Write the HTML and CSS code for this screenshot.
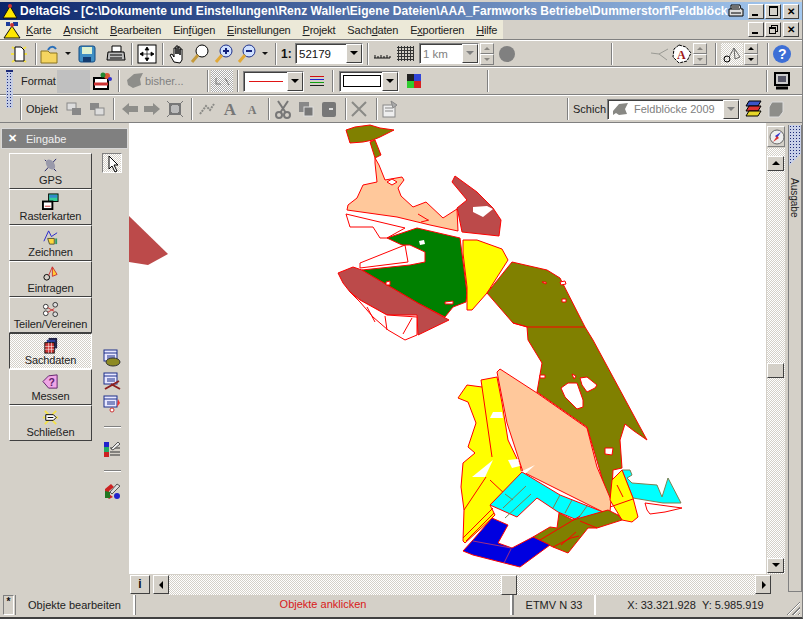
FILE: index.html
```html
<!DOCTYPE html>
<html lang="de">
<head>
  <meta charset="UTF-8" />
  <title>DeltaGIS</title>
  <link rel="stylesheet" href="styles.css">
</head>
<body>

  <!-- Titelleiste -->
  <div class="titlebar">
    <svg class="ico16" viewBox="0 0 16 16"><path d="M8 3L15 15H1z" fill="#ffe800" stroke="#111"/><circle cx="8" cy="3" r="2" fill="#c33"/></svg>
    <div class="title">DeltaGIS - [C:\Dokumente und Einstellungen\Renz Waller\Eigene Dateien\AAA_Farmworks Betriebe\Dummerstorf\Feldblöck</div>
    <div class="printer"><svg width="16" height="14" viewBox="0 0 16 14"><path d="M3 1h9l1 4h2v7H1V5h2z" fill="#ddd" stroke="#000"/><path d="M4 3h7M3 5h9M3 9h10" stroke="#000"/></svg></div>
    <div class="winbtn ml3"><i class="min"></i></div>
    <div class="winbtn ml1"><i class="max"></i></div>
    <div class="winbtn ml2 x">&#x2715;</div>
  </div>

  <!-- Menue -->
  <div class="menubar">
    <div class="menu-left">
      <svg class="ico18" viewBox="0 0 18 18"><path d="M9 5L17 17H1z" fill="#ffe800" stroke="#111"/><path d="M3 1h4v4H3zM10 1h5v4h-5z" fill="#1c3c9c"/><circle cx="9" cy="4" r="2" fill="#c33"/></svg>
      <a class="first"><u>K</u>arte</a>
      <a><u>A</u>nsicht</a>
      <a><u>B</u>earbeiten</a>
      <a>Ein<u>f</u>ügen</a>
      <a><u>E</u>instellungen</a>
      <a><u>P</u>rojekt</a>
      <a>Sach<u>d</u>aten</a>
      <a>E<u>x</u>portieren</a>
      <a><u>H</u>ilfe</a>
    </div>
    <div class="menu-right">
      <div class="winbtn"><i class="min"></i></div>
      <div class="winbtn ml1"><i class="restore"></i></div>
      <div class="winbtn ml2 x">&#x2715;</div>
    </div>
  </div>

  <!-- Griff ueber Leiste 2 und 3 -->
  <div class="grip"></div>

  <!-- Symbolleiste 1 -->
  <div class="toolbar">
    <span class="tb ml8"><svg viewBox="0 0 22 22"><path d="M4 4l3 2M18 4l-3 2M4 19l3-2M18 19l-3-2M3 11h3M16 11h3" stroke="#f4e24a" stroke-width="2"/><path d="M7 4h6l3 3v11H7z" fill="#fff" stroke="#000"/></svg></span>
    <span class="sep ml5"></span>
    <span class="tb ml2"><svg viewBox="0 0 22 22"><path d="M2 8h7l2 2h7v10H2z" fill="#f5d560" stroke="#8a7420"/><path d="M9 7c2-4 6-4 8-1" fill="none" stroke="#2a6fb8" stroke-width="2"/></svg></span>
    <span class="dd"></span>
    <span class="tb"><svg viewBox="0 0 22 22"><rect x="3" y="3" width="16" height="16" rx="2" fill="#3f8fc4" stroke="#134a82"/><rect x="6" y="4" width="10" height="7" fill="#dff2d0"/><rect x="7" y="14" width="8" height="5" fill="#133c70"/></svg></span>
    <span class="tb ml7"><svg viewBox="0 0 22 22"><path d="M7 3h9v6H7z" fill="#fff" stroke="#000"/><path d="M3 9h16l1 8H2z" fill="#bbb" stroke="#000"/><path d="M5 12h12M5 15h12" stroke="#000"/></svg></span>
    <span class="sep ml4"></span>
    <span class="tb ml3"><svg viewBox="0 0 22 22"><rect x="2" y="2" width="18" height="18" fill="#fff" stroke="#000"/><path d="M11 4v14M4 11h14M11 4l-2 3h4zM11 18l-2-3h4zM4 11l3-2v4zM18 11l-3-2v4z" stroke="#000" stroke-width=".7"/></svg></span>
    <span class="sep ml4"></span>
    <span class="tb ml3"><svg viewBox="0 0 22 22"><path d="M7 19l-4-7 2-1 2 3V5h2v6-8h2v8-7h2v8-6h2v11l-2 3z" fill="#fff" stroke="#000"/></svg></span>
    <span class="tb"><svg viewBox="0 0 22 22"><circle cx="13" cy="8" r="6" fill="#fff" stroke="#000"/><path d="M9 12l-6 7" stroke="#c49a3c" stroke-width="3"/></svg></span>
    <span class="tb ml2"><svg viewBox="0 0 22 22"><circle cx="13" cy="8" r="6" fill="#cfe0ff" stroke="#1c2f8a"/><path d="M9 12l-6 7" stroke="#e2a938" stroke-width="3"/><path d="M10 8h6M13 5v6" stroke="#12207a" stroke-width="2"/></svg></span>
    <span class="tb ml1"><svg viewBox="0 0 22 22"><circle cx="13" cy="8" r="6" fill="#cfe0ff" stroke="#1c2f8a"/><path d="M9 12l-6 7" stroke="#e2a938" stroke-width="3"/><path d="M10 8h6" stroke="#12207a" stroke-width="2"/></svg></span>
    <span class="dd"></span>
    <span class="sep ml2"></span>
    <b class="scale-label">1:</b>
    <div class="combo scale"><span class="combo-text">52179</span><span class="combo-arrow"></span></div>
    <span class="sep ml4"></span>
    <span class="tb ml2"><svg viewBox="0 0 22 22"><path d="M3 15h16M4 15v-3M7 15v-2M10 15v-3M13 15v-2M16 15v-3M19 15v-2" stroke="#111"/></svg></span>
    <span class="grid-ico ml4"></span>
    <div class="combo km off"><span class="combo-text">1 km</span><span class="combo-arrow"></span></div>
    <div class="spin ml1"><span class="up off"></span><span class="down off"></span></div>
    <span class="dot"></span>
    <span class="sep push"></span>
    <span class="tb ml35"><svg viewBox="0 0 22 22"><path d="M3 10l8 1 9-5M11 11l8 6" fill="none" stroke="#9a9a94"/></svg></span>
    <span class="tb"><svg viewBox="0 0 22 22"><path d="M9 2l7 2 5 6-4 8-8 2-6-6 1-8z" fill="#fff" stroke="#000" stroke-dasharray="3 1"/><text x="7" y="16" class="ico-a">A</text></svg></span>
    <div class="spin ml1"><span class="up off"></span><span class="down off"></span></div>
    <span class="sep ml8"></span>
    <span class="tb pressed ml4"><svg viewBox="0 0 22 22"><circle cx="6" cy="16" r="3" fill="none" stroke="#000"/><path d="M8 14l5-9M13 5l6 9-5 2z" fill="none" stroke="#666"/></svg></span>
    <div class="spin ml1"><span class="up"></span><span class="down"></span></div>
    <span class="sep ml9"></span>
    <span class="tb ml2"><svg viewBox="0 0 22 22"><circle cx="11" cy="11" r="9" fill="#3d6fd6"/><text x="7" y="16" class="ico-q">?</text></svg></span>
  </div>

  <!-- Symbolleiste 2 -->
  <div class="toolbar mid">
    <span class="tb-label format-label">Format</span>
    <span class="format-box"></span>
    <span class="tb ml1"><svg viewBox="0 0 22 22"><path d="M3 8h14v11H3z" fill="#fff" stroke="#000" stroke-width="2"/><path d="M3 14h14" stroke="#c33" stroke-width="3"/><circle cx="16" cy="6" r="3" fill="#d53"/><circle cx="12" cy="5" r="2.500" fill="#283"/><circle cx="19" cy="9" r="2" fill="#33c"/></svg></span>
    <span class="sep ml5"></span>
    <span class="tb ml4"><svg viewBox="0 0 22 22"><path d="M3 10l7-6 9-1-3 6 1 6-8 3-5-3z" fill="#8e8e8a"/></svg></span>
    <span class="bisher">bisher...</span>
    <span class="sep ml2"></span>
    <span class="tb ml2 pattern"><svg viewBox="0 0 22 22"><path d="M5 8v6h5M14 8l4 7" fill="none" stroke="#777"/></svg></span>
    <span class="sep ml4"></span>
    <div class="combo line ml4"><span class="combo-text"><i class="redline"></i></span><span class="combo-arrow"></span></div>
    <span class="tb ml2 lines"><i class="l1"></i><i class="l2"></i><i class="l3"></i><i class="l4"></i></span>
    <span class="sep ml4"></span>
    <div class="combo box ml5"><span class="combo-text"><i class="whitebox"></i></span><span class="combo-arrow"></span></div>
    <span class="colors"><i class="c1"></i><i class="c2"></i><i class="c3"></i><i class="c4"></i></span>
    <span class="sep ml66"></span>
    <span class="sep push"></span>
    <span class="tb ml3"><svg viewBox="0 0 22 22"><rect x="4" y="3" width="14" height="12" fill="#ccc" stroke="#000" stroke-width="2"/><rect x="7" y="6" width="8" height="6" fill="#556"/><path d="M5 18h12" stroke="#000" stroke-width="3"/></svg></span>
  </div>

  <!-- Symbolleiste 3 -->
  <div class="toolbar last">
    <span class="sep ml20"></span>
    <span class="tb-label objekt-label">Objekt</span>
    <span class="tb ml3 dis"><svg viewBox="0 0 22 22"><rect x="4" y="5" width="9" height="7" fill="#ddd" stroke="#888"/><rect x="9" y="10" width="9" height="7" fill="#888"/></svg></span>
    <span class="tb ml1 dis"><svg viewBox="0 0 22 22"><rect x="4" y="5" width="9" height="7" fill="#888"/><rect x="9" y="10" width="9" height="7" fill="#ddd" stroke="#888"/></svg></span>
    <span class="sep ml5"></span>
    <span class="tb ml4 dis"><svg viewBox="0 0 22 22"><path d="M3 11l7-6v3h9v6h-9v3z" fill="#8e8e8a"/></svg></span>
    <span class="tb dis"><svg viewBox="0 0 22 22"><path d="M19 11l-7-6v3H3v6h9v3z" fill="#8e8e8a"/></svg></span>
    <span class="tb ml1 dis"><svg viewBox="0 0 22 22"><path d="M6 6h10v10H6z" fill="#bbb" stroke="#777" stroke-width="2"/><path d="M3 3l5 5M19 3l-5 5M3 19l5-5M19 19l-5-5" stroke="#777"/></svg></span>
    <span class="sep ml5"></span>
    <span class="tb ml3 dis"><svg viewBox="0 0 22 22"><path d="M4 16l6-8 4 4 4-6" fill="none" stroke="#8a8a86" stroke-dasharray="2 1" stroke-width="2"/></svg></span>
    <span class="tb ml1 dis ico-let big">A</span>
    <span class="tb dis ico-let">A</span>
    <span class="sep ml5"></span>
    <span class="tb ml2 dis"><svg viewBox="0 0 22 22"><path d="M6 3l8 12M16 3L8 15" stroke="#777" stroke-width="2"/><circle cx="7" cy="17" r="3" fill="none" stroke="#777" stroke-width="2"/><circle cx="15" cy="17" r="3" fill="none" stroke="#777" stroke-width="2"/></svg></span>
    <span class="tb ml1 dis"><svg viewBox="0 0 22 22"><rect x="4" y="4" width="10" height="10" fill="#888"/><rect x="9" y="9" width="9" height="9" fill="#777" stroke="#ddd"/></svg></span>
    <span class="tb ml1 dis"><svg viewBox="0 0 22 22"><rect x="4" y="4" width="14" height="15" rx="2" fill="#777"/><rect x="11" y="10" width="4" height="2" fill="#ddd"/></svg></span>
    <span class="sep ml5"></span>
    <span class="tb ml1 dis"><svg viewBox="0 0 22 22"><path d="M4 4l14 14M18 4L4 18" stroke="#8a8a86" stroke-width="2"/></svg></span>
    <span class="sep ml6"></span>
    <span class="tb ml1 dis"><svg viewBox="0 0 22 22"><rect x="4" y="7" width="12" height="12" fill="#eee" stroke="#888"/><path d="M6 10h8M6 13h8M12 3l6 4-4 3z" stroke="#888" fill="#aaa"/></svg></span>
    <span class="sep push"></span>
    <span class="tb-label schicht-label">Schich</span>
    <div class="combo layer off"><span class="combo-text"><svg width="20" height="14" viewBox="0 0 20 14"><path d="M2 9l6-7 9-1-3 6 2 5-8 1-3-2-3 2z" fill="#888884"/></svg>Feldblöcke 2009</span><span class="combo-arrow"></span></div>
    <span class="tb ml2"><svg viewBox="0 0 22 22"><path d="M7 3h12l-3 5H4z" fill="#3a55c8" stroke="#000"/><path d="M7 8h12l-3 5H4z" fill="#d33" stroke="#000"/><path d="M7 13h12l-3 5H4z" fill="#e6d628" stroke="#000"/></svg></span>
    <span class="tb ml1 mr6 dis"><svg viewBox="0 0 22 22"><path d="M7 4h11v10l-4 5H4V9z" fill="#8e8e8a" stroke="#ddd"/></svg></span>
  </div>

  <div class="workarea">

    <!-- Eingabe -->
    <div class="panel">
      <div class="panel-head"><span class="panel-x">&#x2715;</span><span>Eingabe</span></div>
      <div class="panel-body">
        <div class="bigbtns">
          <div class="bigbtn"><svg viewBox="0 0 18 18"><path d="M3 3l12 12M15 2L3 15" stroke="#226"/><ellipse cx="9" cy="8" rx="4" ry="6" transform="rotate(-40 9 8)" fill="#99a"/></svg>GPS</div>
          <div class="bigbtn"><svg viewBox="0 0 18 18"><rect x="7" y="1" width="10" height="8" fill="#3c9" stroke="#000"/><rect x="8" y="2" width="8" height="3" fill="#38c"/><rect x="1" y="9" width="10" height="8" fill="#fff" stroke="#000" stroke-width="2"/><path d="M3 14h6" stroke="#c33"/></svg>Rasterkarten</div>
          <div class="bigbtn"><svg viewBox="0 0 18 18"><path d="M2 13L7 2l3 6 6-4" fill="none" stroke="#22c"/><path d="M6 10h7v6H8z" fill="#ffd83c" stroke="#553"/><path d="M14 10h2v6h-2z" fill="#396"/></svg>Zeichnen</div>
          <div class="bigbtn"><svg viewBox="0 0 18 18"><circle cx="5" cy="13" r="3" fill="none" stroke="#000"/><path d="M7 11l4-9M11 2l5 8-5 2z" fill="#fc3" stroke="#c33"/></svg>Eintragen</div>
          <div class="bigbtn"><svg viewBox="0 0 18 18"><circle cx="4" cy="6" r="2.500" fill="#fff" stroke="#333"/><circle cx="4" cy="13" r="2.500" fill="#fff" stroke="#333"/><circle cx="14" cy="4" r="2.500" fill="#ddd" stroke="#333"/><circle cx="14" cy="14" r="2.500" fill="#ddd" stroke="#333"/><path d="M6 7l7 4M6 12l7-4" stroke="#c33"/></svg>Teilen/Vereinen</div>
          <div class="bigbtn pressed"><svg viewBox="0 0 18 18"><rect x="7" y="1" width="9" height="11" fill="#224" /><rect x="5" y="3" width="9" height="11" fill="#2a3e9c"/><rect x="3" y="6" width="10" height="11" fill="#c33" stroke="#111"/><path d="M3 10h10M3 13h10M7 6v11M10 6v11" stroke="#fff" stroke-width=".6"/></svg>Sachdaten</div>
          <div class="bigbtn"><svg viewBox="0 0 18 18"><path d="M1 9l6-6 9-1v14H7z" fill="#f0a6e6" stroke="#60206a"/><text x="7" y="14" class="ico-m">?</text></svg>Messen</div>
          <div class="bigbtn"><svg viewBox="0 0 18 18"><path d="M3 2l4 4M15 2l-4 4M3 16l4-4M15 16l-4-4M1 9h3M14 9h3" stroke="#f4e24a" stroke-width="2"/><path d="M4 6h8l3 3-3 3H4z" fill="#fff" stroke="#000"/><path d="M6 9h6" stroke="#000"/></svg>Schließen</div>
        </div>
        <div class="tools">
          <div class="cursor-btn"><svg width="14" height="18" viewBox="0 0 14 18"><path d="M2 1v13l3-3 3 6 2-1-3-6h4z" fill="#fff" stroke="#000"/></svg></div>
          <svg class="tool t-first" viewBox="0 0 18 18"><rect x="1" y="1" width="13" height="11" fill="#e8e8ff" stroke="#1c2f8a"/><path d="M1 4h13M4 7h8M4 9h8" stroke="#1c2f8a"/><ellipse cx="10" cy="13" rx="7" ry="4" fill="#8d8a22" stroke="#333"/></svg>
          <svg class="tool" viewBox="0 0 18 18"><rect x="1" y="1" width="13" height="11" fill="#e8e8ff" stroke="#1c2f8a"/><path d="M1 4h13M4 7h8M4 9h8" stroke="#1c2f8a"/><path d="M2 17l14-8M8 12l9 5" stroke="#8c1f1f" stroke-width="2"/></svg>
          <svg class="tool" viewBox="0 0 18 18"><rect x="1" y="1" width="13" height="11" fill="#e8e8ff" stroke="#1c2f8a"/><path d="M1 4h13M4 7h8M4 9h8" stroke="#1c2f8a"/><circle cx="9" cy="15" r="2" fill="#fff" stroke="#c33"/><path d="M15 4l2 4-3 4z" fill="#e33"/></svg>
          <span class="tool-sep"></span>
          <svg class="tool" viewBox="0 0 18 18"><rect x="1" y="2" width="5" height="5" fill="#22c"/><rect x="1" y="7" width="5" height="5" fill="#2a6"/><rect x="1" y="12" width="5" height="5" fill="#c22"/><path d="M7 8h10M7 12h10M7 15h10" stroke="#333"/><path d="M8 9l7-7 2 2-7 6z" fill="#eee" stroke="#555"/></svg>
          <span class="tool-sep two"></span>
          <svg class="tool" viewBox="0 0 18 18"><path d="M2 7l6-5 3 3-5 4v3l4 3-4 2-4-4z" fill="#c22"/><path d="M2 9l5 1v6H2z" fill="#272"/><circle cx="14" cy="14" r="3" fill="#22c"/><path d="M7 10l7-8 3 2-8 8z" fill="#ddd" stroke="#555"/></svg>
        </div>
      </div>
    </div>

    <!-- Karte -->
    <div class="map">
      <svg width="637" height="451" viewBox="129 123 637 451">
        <g stroke="#f00" stroke-width="1" stroke-linejoin="round">
          <polygon fill="#bc4a4a" stroke="none" points="129,216 168,254 148,265 129,262"/>
          <polygon fill="#808000" points="346,130 355,127 370,125 380,128 394,130 380,137 373,140 363,142 350,143"/>
          <polygon fill="#808000" points="370,142 375,140 381,155 375,158"/>
          <polygon fill="#ffc89b" points="375,158 379,165 385,180 402,177 404,180 398,188 401,196 413,207 426,202 443,218 457,209 458,231 430,225 397,217 347,210 348,205 357,198 363,185 377,182 375,163"/>
          <polygon fill="#fff" points="387,182 392,179 397,182 392,185"/>
          <path d="M418,214l10,6M421,222l8,-2" fill="none"/>
          <polygon fill="#fff" points="346,214 405,228 387,238 380,238 373,227 350,227"/>
          <polygon fill="#bc4a4a" points="455,176 477,192 493,208 501,220 499,236 462,232 458,212 457,208 467,200 452,182"/>
          <polygon fill="#fff" stroke="none" points="473,207 487,206 493,209 483,217 473,212"/>
          <polygon fill="#fff" points="360,263 405,245 408,262 360,268"/>
          <polygon fill="#bc4a4a" points="338,273 353,267 362,270 418,303 449,320 418,335 417,315 387,315 360,300 350,292 343,283"/>
          <polygon fill="#fff" points="350,292 360,302 373,317 388,330 405,340 417,335 417,317 387,315 360,300"/>
          <path d="M367,307l8,15M385,316l2,14M412,318l-9,16" fill="none"/>
          <polygon fill="#008000" points="387,238 417,228 460,238 467,293 466,302 453,307 445,317 418,303 362,270 410,265 425,262 425,252 410,245 402,245"/>
          <polygon fill="#fff" stroke="none" points="419,241 424,240 425,244 420,245"/>
          <polygon fill="#fff" points="386,282 390,281 390,285 386,285"/>
          <polygon fill="#fff" points="445,302 453,301 453,304 445,304"/>
          <polygon fill="#ffff00" points="463,240 477,240 502,249 508,260 487,293 472,310 467,310 467,287 463,253"/>
          <polygon fill="#808000" points="512,262 547,270 560,278 585,327 593,340 647,440 634,431 625,424 620,440 622,468 613,470 612,490 610,505 587,427 537,392 542,363 528,340 527,327 513,323 487,293"/>
          <path d="M513,323l15,4 57,0" fill="none"/>
          <polygon fill="#fff" points="561,388 568,383 577,383 583,400 583,407 577,409 565,397"/>
          <polygon fill="#fff" points="580,378 587,377 597,385 595,388 587,392 582,385"/>
          <polygon fill="#fff" points="605,448 613,448 612,455 605,454"/>
          <polygon fill="#fff" points="540,375 545,375 545,378 540,378"/>
          <polygon fill="#fff" points="572,374 576,376 574,379"/>
          <polygon fill="#fff" points="542,282 546,282 546,284"/>
          <polygon fill="#fff" points="560,282 565,281 566,284 561,285"/>
          <polygon fill="#fff" points="562,299 566,299 566,302 562,302"/>
          <polygon fill="#ffc89b" points="497,372 500,369 537,393 587,428 597,467 611,500 610,512 603,512 523,472 507,423"/>
          <polygon fill="#ffff00" points="458,398 467,385 482,387 481,380 497,377 502,403 508,440 520,465 522,474 490,505 495,515 490,520 465,543 463,541 464,510 461,487 463,463 475,453 468,447 476,423 468,402"/>
          <path d="M482,387l10,70M486,477l-22,33M490,480l17,16M463,538l30,-30M466,541l28,-28" fill="none"/>
          <polygon fill="#fff" stroke="none" points="472,477 493,460 485,477"/>
          <polygon fill="#fff" stroke="none" points="490,418 493,412 502,412 503,418"/>
          <polygon fill="#fff" stroke="none" points="508,460 518,459 520,466 512,468"/>
          <polygon fill="#fff" stroke="none" points="520,472 535,465 525,474"/>
          <polygon fill="#00ffff" points="522,472 560,495 603,512 582,522 558,512 537,498 517,517 490,505"/>
          <path d="M526,486l-23,22M531,494l-26,24M560,495l-7,13M572,500l-7,13M587,506l-10,14M505,494l8,6" fill="none" stroke="#7f7f50"/>
          <polygon fill="#00ffff" stroke="#7f7f50" points="622,470 630,470 632,475 627,478 632,483 657,485 662,497 668,478 681,503 663,503 633,498"/>
          <polygon fill="#fff" points="645,503 682,508 665,512 650,514 647,510"/>
          <polygon fill="#ffff00" points="622,470 633,498 638,517 632,522 622,520 610,500 612,480"/>
          <path d="M610,507l23,-8M617,485l6,12" fill="none"/>
          <polygon fill="#808000" points="533,537 550,527 557,528 559,513 573,520 608,510 618,515 622,520 597,528 588,528 568,553 553,547"/>
          <path d="M540,540l40,-24M553,547l18,-9 8,-2M561,545l15,-13M580,521l17,7" fill="none"/>
          <polygon fill="#0000e0" points="463,551 473,540 492,518 508,525 498,543 512,548 533,537 550,545 520,567 473,555"/>
          <path d="M473,541l38,7M511,549l-7,14" fill="none" stroke="#a03080"/>
        </g>
      </svg>
    </div>

    <div class="vbar">
      <div class="compass"><svg width="16" height="16" viewBox="0 0 16 16"><circle cx="8" cy="8" r="7" fill="#eee" stroke="#666"/><path d="M12 3L8 9 6 7z" fill="#33c"/><path d="M4 13l4-6 2 2z" fill="#d33"/></svg></div>
      <div class="vtrack">
        <div class="sbtn arr-up"></div>
        <div class="vthumb"></div>
        <div class="sbtn arr-down"></div>
      </div>
    </div>

    <div class="hbar">
      <div class="info-btn">i</div>
      <div class="sbtn arr-left"></div>
      <div class="htrack"><div class="hthumb"></div></div>
      <div class="sbtn arr-right"></div>
    </div>

    <!-- Ausgabe -->
    <div class="outtab">
      <div class="out-grip"></div>
      <div class="out-label">Ausgabe</div>
    </div>
  </div>

  <!-- Statusleiste -->
  <div class="statusbar">
    <div class="st-btn">*</div>
    <div class="st-cell st-mode">Objekte bearbeiten</div>
    <div class="st-cell st-msg">Objekte anklicken</div>
    <div class="st-cell st-crs">ETMV N 33</div>
    <div class="st-cell st-pos">X: 33.321.928 &nbsp;Y: 5.985.919</div>
    <div class="st-grip"></div>
  </div>

</body>
</html>
```

FILE: styles.css
```css
* {
  box-sizing: border-box;
  margin: 0;
  padding: 0;
}
body {
  width: 803px;
  height: 619px;
  overflow: hidden;
  background: #d4d0c8;
  font-family: 'Liberation Sans', Arial, sans-serif;
  font-size: 12px;
  color: #111;
  display: flex;
  flex-direction: column;
  border-bottom: 2px solid #404040;
  border-right: 1px solid #808080;
  position: relative;
}

/* Titelleiste */
.titlebar {
  height: 18px;
  margin-top: 2px;
  flex: none;
  display: flex;
  align-items: center;
  padding: 0 3px 0 2px;
  background: linear-gradient(to right, #0a246a, #a6caf0);
  color: #fff;
}
.ico16 { width: 16px; height: 16px; flex: none; }
.ico18 { width: 18px; height: 18px; flex: none; margin-left: 3px; }
.title {
  flex: 1;
  margin-left: 2px;
  font-weight: bold;
  font-size: 12px;
  letter-spacing: .04px;
  white-space: nowrap;
  overflow: hidden;
}
.printer { width: 17px; height: 14px; flex: none; }
.winbtn {
  width: 16px;
  height: 15px;
  flex: none;
  background: #d4d0c8;
  border: 1px solid;
  border-color: #fff #404040 #404040 #fff;
  position: relative;
  color: #000;
  font-size: 10px;
  font-weight: bold;
  line-height: 13px;
  text-align: center;
}
.min { position: absolute; left: 3px; bottom: 2px; width: 6px; height: 2px; background: #000; }
.max { position: absolute; left: 3px; top: 1px; width: 9px; height: 10px; border: 1px solid #000; border-top-width: 2px; }
.restore { position: absolute; left: 3px; top: 4px; width: 7px; height: 7px; border: 1px solid #000; border-top-width: 2px; background: #d4d0c8; box-shadow: 2px -2px 0 -1px #d4d0c8, 2px -2px 0 0 #000; }

/* Menue */
.menubar {
  height: 20px;
  flex: none;
  display: flex;
  background: #d4d0c8;
  border-bottom: 1px solid #808080;
}
.menu-left {
  width: 503px;
  display: flex;
  align-items: center;
  background: #ece9d8;
}
.menu-left a {
  margin-left: 12px;
  font-size: 11px;
  letter-spacing: -.2px;
  color: #222;
}
.menu-left a.first { margin-left: 5px; }
.menu-right {
  flex: 1;
  display: flex;
  align-items: center;
  justify-content: flex-end;
  padding-right: 3px;
}
.grip {
  position: absolute;
  left: 6px;
  top: 70px;
  width: 7px;
  height: 38px;
  background: radial-gradient(circle, #1c2a78 .8px, transparent 1px) 0 0/3px 3px #c4cce4;
  border-top: 2px solid #1c2a78;
}

/* Symbolleisten */
.toolbar {
  height: 27px;
  flex: none;
  display: flex;
  align-items: center;
  padding-right: 9px;
  border-top: 1px solid #fff;
  border-bottom: 1px solid #808080;
}
.toolbar.mid { height: 28px; }
.toolbar.last { height: 28px; }
.tb {
  width: 22px;
  height: 22px;
  flex: none;
  display: inline-block;
}
.tb svg { display: block; width: 22px; height: 22px; }
.sep {
  width: 2px;
  height: 22px;
  flex: none;
  border-left: 1px solid #808080;
  border-right: 1px solid #fff;
}
.sep.push { margin-left: auto; }
.ml1 { margin-left: 1px; }
.ml2 { margin-left: 2px; }
.ml3 { margin-left: 3px; }
.ml4 { margin-left: 4px; }
.ml5 { margin-left: 5px; }
.ml6 { margin-left: 6px; }
.ml7 { margin-left: 7px; }
.ml8 { margin-left: 8px; }
.ml9 { margin-left: 9px; }
.ml20 { margin-left: 20px; }
.ml35 { margin-left: 35px; }
.ml66 { margin-left: 66px; }
.mr6 { margin-right: 6px; }
.dd {
  width: 0;
  height: 0;
  margin: 0 5px 0 4px;
  flex: none;
  border: 3px solid transparent;
  border-top: 3px solid #111;
  border-bottom: 0;
}
.scale-label { margin-left: 4px; width: 14px; font-size: 12px; flex: none; }
.combo {
  height: 21px;
  flex: none;
  display: flex;
  align-items: stretch;
  background: #fff;
  border: 1px solid;
  border-color: #808080 #fff #fff #808080;
  box-shadow: inset 1px 1px 0 #404040;
}
.combo-text {
  flex: 1;
  display: flex;
  align-items: center;
  gap: 3px;
  padding-left: 3px;
  font-size: 11.5px;
  white-space: nowrap;
  overflow: hidden;
}
.combo-arrow {
  width: 16px;
  flex: none;
  background: #d4d0c8;
  border: 1px solid;
  border-color: #fff #404040 #404040 #fff;
  position: relative;
}
.combo-arrow::after {
  content: "";
  position: absolute;
  left: 3px;
  top: 6px;
  border: 4px solid transparent;
  border-top: 4px solid #000;
  border-bottom: 0;
}
.combo.off .combo-text { color: #808080; }
.combo.off .combo-arrow::after { border-top-color: #808080; }
.scale { width: 68px; }
.km { width: 60px; margin-left: 5px; }
.line { width: 61px; }
.box { width: 60px; }
.layer { width: 133px; margin-left: 1px; }
.layer .combo-text { font-size: 11px; }
.redline { display: block; width: 34px; height: 1px; margin-left: 2px; flex: none; background: #e01414; }
.whitebox { display: block; width: 38px; height: 12px; flex: none; background: #fff; border: 1px solid #000; }
.grid-ico {
  background: radial-gradient(circle, #333 1px, transparent 1.2px) 0 0/3px 3px;
  height: 15px;
  width: 17px;
  flex: none;
}
.spin {
  width: 14px;
  height: 22px;
  flex: none;
  display: flex;
  flex-direction: column;
}
.spin span {
  flex: 1;
  background: #d4d0c8;
  border: 1px solid;
  border-color: #fff #808080 #808080 #fff;
  position: relative;
}
.spin span::after {
  content: "";
  position: absolute;
  left: 3px;
  top: 3px;
  border: 3px solid transparent;
}
.spin .up::after { border-bottom-color: #000; border-top: 0; }
.spin .down::after { border-top-color: #000; border-bottom: 0; }
.spin .off::after { opacity: .35; }
.dot {
  width: 16px;
  height: 16px;
  margin-left: 5px;
  flex: none;
  border-radius: 50%;
  background: #808080;
}
.pressed {
  background: repeating-conic-gradient(#fff 0 25%, #d4d0c8 0 50%) 0 0/2px 2px;
}
.pattern { background: repeating-conic-gradient(#fff 0 25%, #aaa 0 50%) 0 0/2px 2px; }
.tb-label { font-size: 11px; flex: none; color: #222; }
.format-label { margin-left: 21px; width: 36px; }
.objekt-label { margin-left: 4px; width: 34px; }
.schicht-label { margin-left: 4px; width: 33px; }
.format-box { width: 33px; height: 23px; flex: none; background: #c0c0c0; }
.bisher { margin-left: -1px; width: 60px; font-size: 11px; color: #808080; flex: none; }
.lines {
  display: flex;
  flex-direction: column;
  justify-content: center;
  gap: 2px;
  padding: 0 4px;
}
.lines i { display: block; height: 1px; }
.l1 { background: #d01010; }
.l2 { background: #2020d0; }
.l3 { background: #10a010; }
.l4 { background: #202020; }
.colors {
  width: 14px;
  height: 14px;
  margin-left: 8px;
  flex: none;
  display: grid;
  grid-template-columns: 1fr 1fr;
}
.colors i { display: block; }
.c1 { background: #222; }
.c2 { background: #3044d8; }
.c3 { background: #2ecb2e; }
.c4 { background: #d82020; }
.ico-a { font: bold 12px 'Liberation Serif', serif; fill: #a01818; }
.ico-q { font: bold 14px 'Liberation Sans', sans-serif; fill: #fff; }
.ico-m { font: bold 11px 'Liberation Sans', sans-serif; fill: #60206a; }
.ico-let {
  font: bold 12px 'Liberation Serif', serif;
  color: #777;
  text-align: center;
  line-height: 24px;
}
.ico-let.big { font-size: 17px; }

/* Arbeitsbereich */
.workarea {
  flex: 1;
  min-height: 0;
  display: grid;
  grid-template-columns: 129px 637px 22px 1fr;
  grid-template-rows: 451px 1fr;
}
.panel {
  grid-row: 1 / 3;
  padding-top: 5px;
}
.panel-head {
  height: 21px;
  margin: 0 1px 0 1px;
  display: flex;
  align-items: center;
  gap: 9px;
  padding-left: 6px;
  background: #808080;
  border: 1px solid #d8d8d8;
  color: #f0f0f0;
  font-size: 11px;
}
.panel-x { font-size: 11px; font-weight: bold; color: #fff; }
.panel-body {
  display: flex;
  padding: 4px 0 0 9px;
}
.bigbtns { width: 83px; display: flex; flex-direction: column; }
.bigbtn {
  height: 36px;
  display: flex;
  flex-direction: column;
  align-items: center;
  font-size: 11px;
  letter-spacing: -.1px;
  line-height: 12px;
  color: #222;
  border: 1px solid;
  border-color: #fff #404040 #404040 #fff;
  background-color: #d4d0c8;
}
.bigbtn svg { width: 17px; height: 17px; margin-top: 3px; flex: none; }
.bigbtn.pressed {
  border-color: #404040 #fff #fff #404040;
  background-image: repeating-conic-gradient(#fff 0 25%, #d4d0c8 0 50%);
  background-size: 2px 2px;
}
.tools {
  margin-left: 10px;
  width: 20px;
  display: flex;
  flex-direction: column;
  align-items: center;
}
.cursor-btn {
  width: 20px;
  height: 20px;
  flex: none;
  padding: 1px 0 0 4px;
  border: 1px solid;
  border-color: #808080 #fff #fff #808080;
  background: repeating-conic-gradient(#fff 0 25%, #d4d0c8 0 50%) 0 0/2px 2px;
}
.tool { width: 18px; height: 18px; flex: none; margin-top: 5px; }
.tool.t-first { margin-top: 176px; }
.tool-sep {
  width: 17px;
  height: 2px;
  margin-top: 13px;
  margin-bottom: 7px;
  flex: none;
  border-top: 1px solid #808080;
  border-bottom: 1px solid #fff;
}
.tool-sep.two { margin-top: 12px; margin-bottom: 5px; }

/* Karte */
.map {
  background: #fff;
  overflow: hidden;
}
.map svg { display: block; }
.vbar {
  display: flex;
  flex-direction: column;
  padding: 3px 0 0 1px;
}
.compass {
  width: 18px;
  height: 21px;
  padding: 2px 0 0 1px;
  flex: none;
  border: 1px solid;
  border-color: #fff #808080 #808080 #fff;
}
.vtrack {
  flex: 1;
  width: 18px;
  margin-top: 1px;
  display: flex;
  flex-direction: column;
  justify-content: space-between;
  background: repeating-conic-gradient(#fff 0 25%, #d4d0c8 0 50%) 0 0/2px 2px;
  position: relative;
}
.sbtn {
  width: 17px;
  height: 15px;
  flex: none;
  background: #d4d0c8;
  border: 1px solid;
  border-color: #fff #404040 #404040 #fff;
  position: relative;
}
.sbtn::after {
  content: "";
  position: absolute;
  left: 4px;
  top: 4px;
  border: 4px solid transparent;
}
.arr-up { margin-top: 8px; }
.arr-up::after { border-bottom-color: #000; border-top: 0; }
.arr-down { margin-bottom: 1px; }
.arr-down::after { border-top-color: #000; border-bottom: 0; }
.arr-left::after { border-right-color: #000; border-left: 0; left: 5px; top: 5px; }
.arr-right::after { border-left-color: #000; border-right: 0; left: 6px; top: 5px; }
.vthumb {
  position: absolute;
  left: 0;
  top: 215px;
  width: 17px;
  height: 15px;
  background: #d4d0c8;
  border: 1px solid;
  border-color: #fff #404040 #404040 #fff;
}
.hbar {
  grid-column: 2 / 4;
  display: flex;
  align-items: center;
  padding: 0 0 0 1px;
  height: 21px;
  background: #d4d0c8;
}
.hbar .sbtn { width: 16px; height: 19px; }
.info-btn {
  width: 20px;
  height: 19px;
  margin-right: 3px;
  flex: none;
  text-align: center;
  font: bold 12px/17px 'Liberation Sans', sans-serif;
  border: 1px solid;
  border-color: #fff #404040 #404040 #fff;
}
.htrack {
  width: 586px;
  height: 20px;
  flex: none;
  position: relative;
  background: repeating-conic-gradient(#fff 0 25%, #d4d0c8 0 50%) 0 0/2px 2px;
}
.hthumb {
  position: absolute;
  left: 332px;
  top: 0;
  width: 16px;
  height: 20px;
  background: #d4d0c8;
  border: 1px solid;
  border-color: #fff #404040 #404040 #fff;
}
.outtab {
  grid-column: 4;
  grid-row: 1 / 3;
  margin: 2px 0 3px 0;
  border-left: 1px solid #808080;
  border-right: 1px solid #808080;
  border-bottom: 1px solid #808080;
  background: #d4d0c8;
}
.out-grip {
  width: 12px;
  height: 41px;
  background: radial-gradient(circle, #1c2a78 .8px, transparent 1px) 0 0/3px 3px #c8d0e8;
  clip-path: polygon(0 0, 100% 0, 100% 70%, 0 100%);
}
.out-label {
  margin-top: 12px;
  writing-mode: vertical-rl;
  font-size: 10px;
  color: #222;
}

/* Statusleiste */
.statusbar {
  height: 22px;
  flex: none;
  display: flex;
  align-items: stretch;
  padding: 0 1px 2px 3px;
  position: relative;
}
.st-btn {
  width: 11px;
  flex: none;
  font-size: 10px;
  font-weight: bold;
  line-height: 12px;
  text-align: center;
  border: 1px solid;
  border-color: #808080 #fff #fff #808080;
}
.st-cell {
  flex: none;
  display: flex;
  align-items: center;
  justify-content: center;
  font-size: 11px;
  color: #222;
  border-right: 2px solid #fff;
  border-left: 1px solid #808080;
}
.st-mode { width: 120px; margin-left: 1px; }
.st-msg { width: 377px; color: #d81818; padding-bottom: 2px; }
.st-crs { width: 84px; border-left: 2px solid #808080; }
.st-pos { flex: 1; border: 0; padding-right: 6px; }
.st-grip {
  position: absolute;
  right: 2px;
  bottom: 2px;
  width: 14px;
  height: 14px;
  background: repeating-linear-gradient(135deg, transparent 0 2px, #808080 2px 3px, #fff 3px 4px);
  clip-path: polygon(100% 0, 100% 100%, 0 100%);
}
```
